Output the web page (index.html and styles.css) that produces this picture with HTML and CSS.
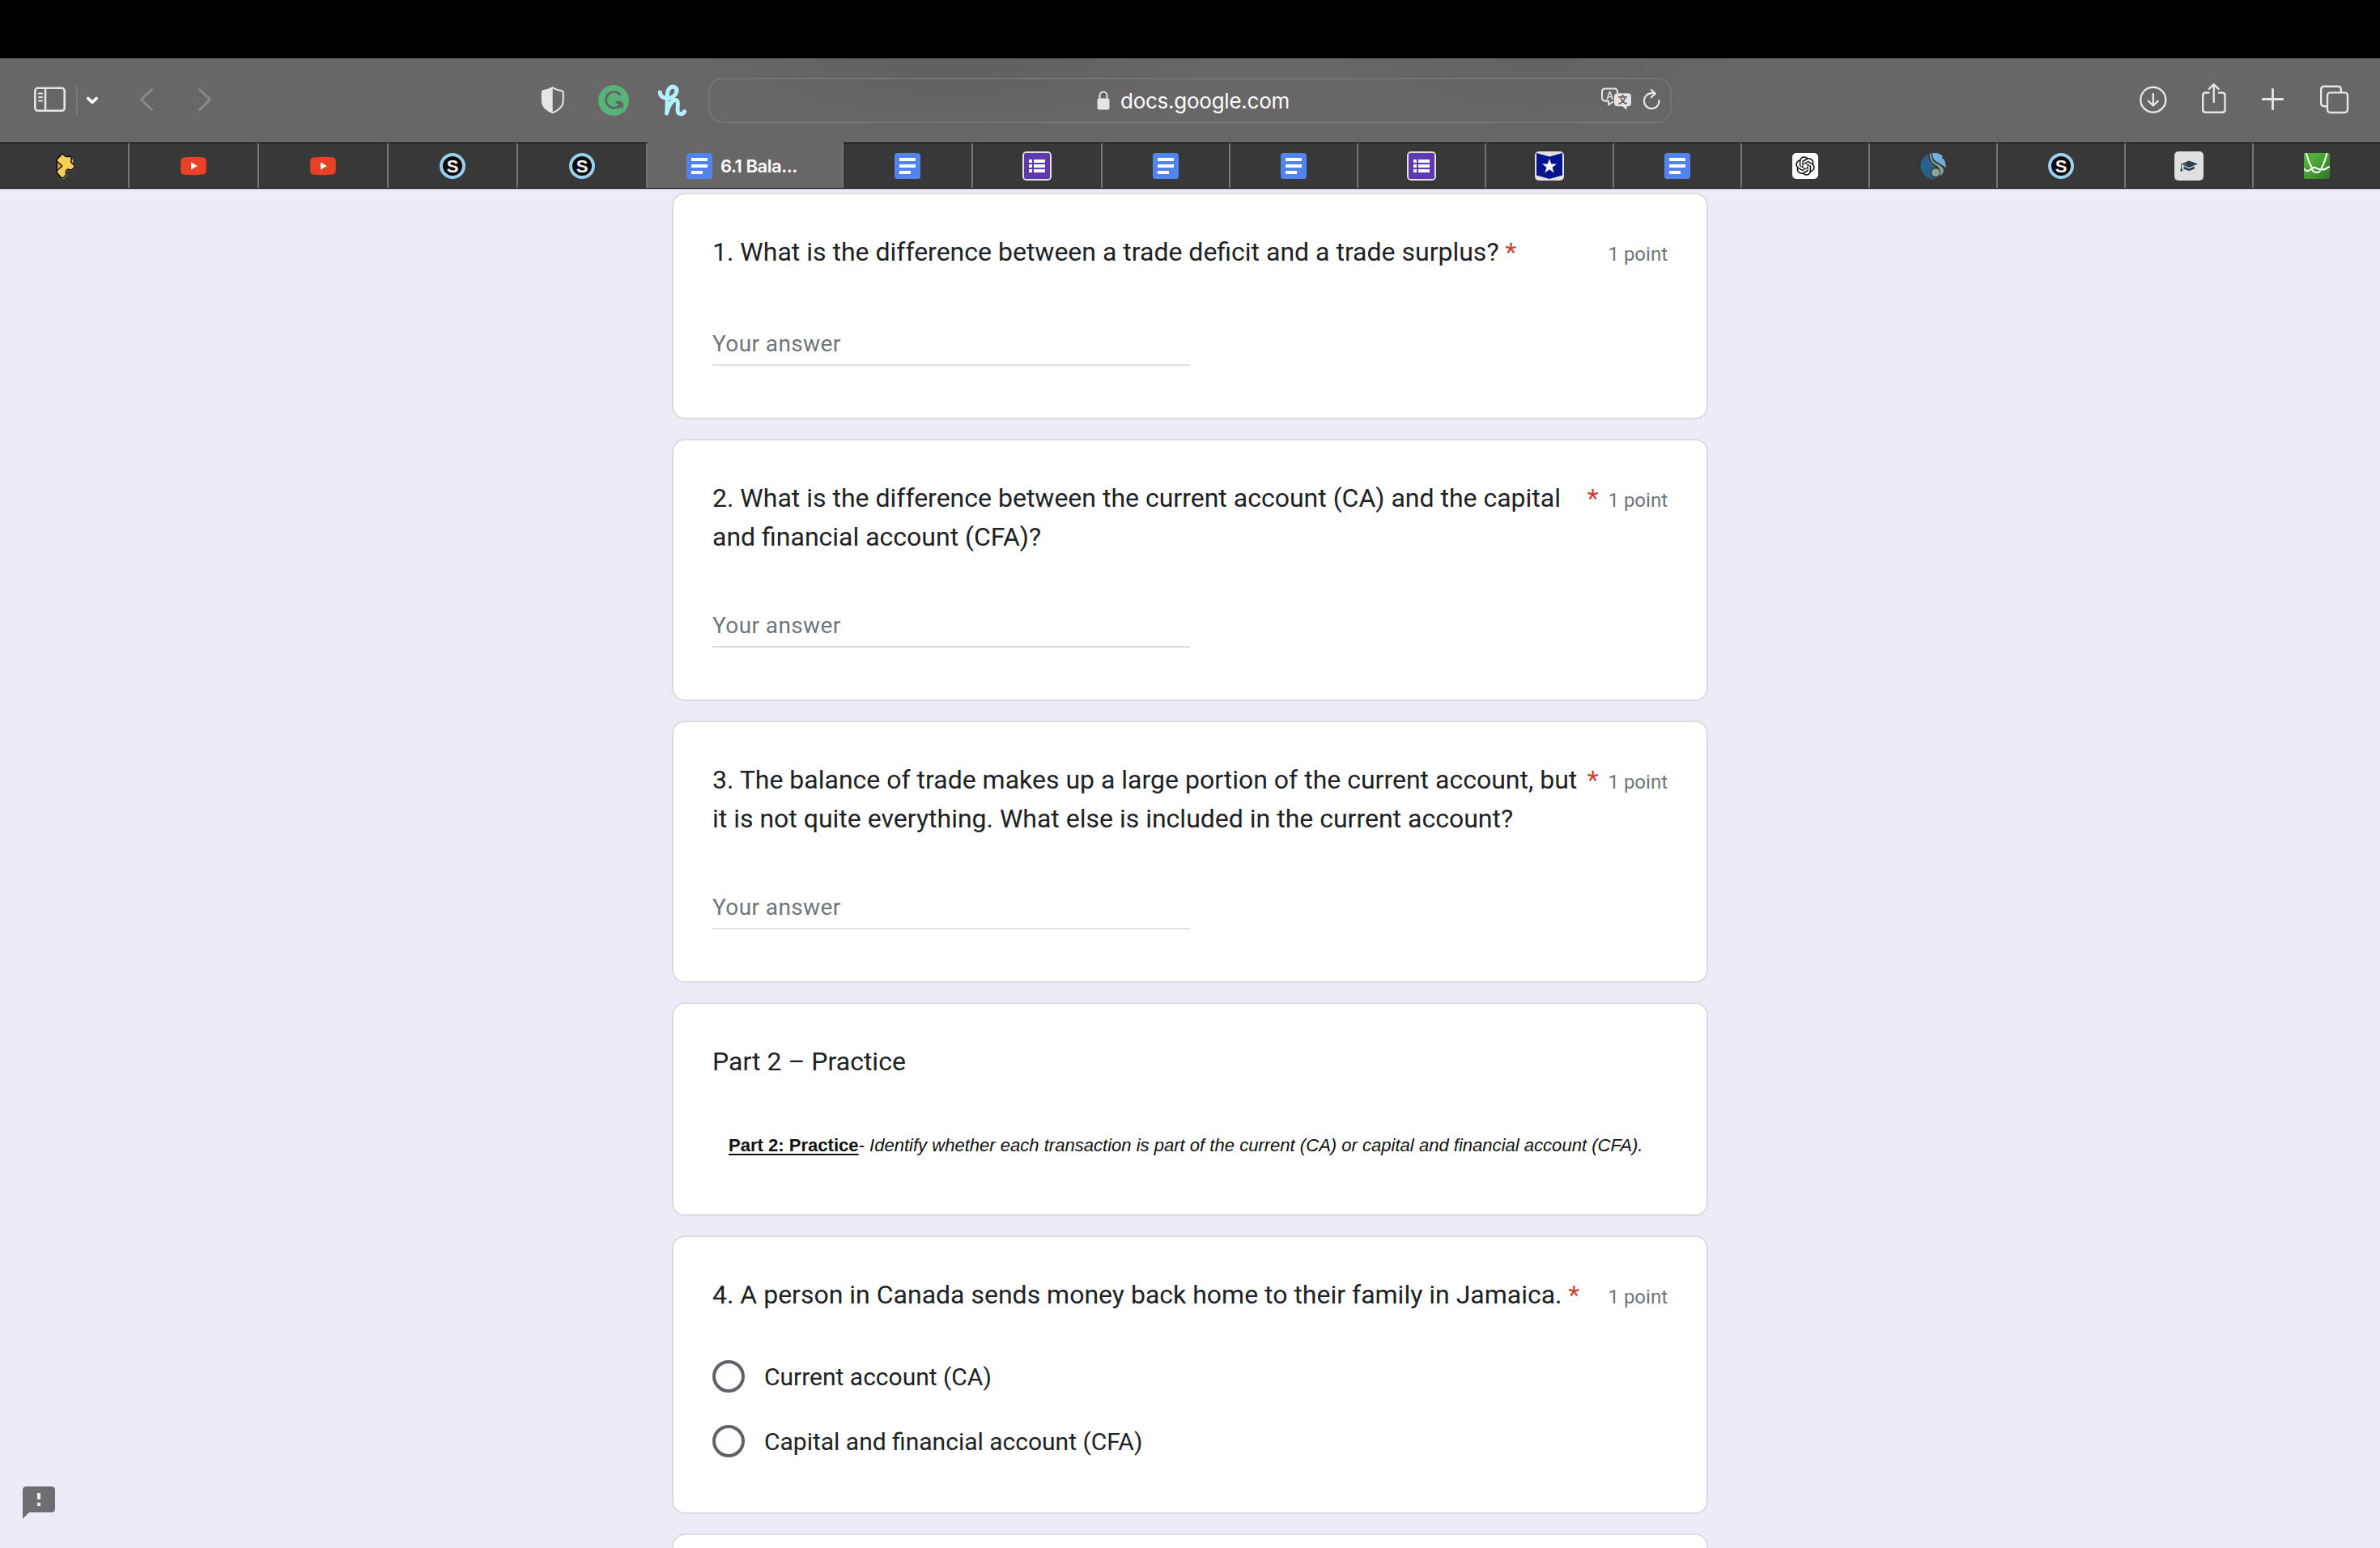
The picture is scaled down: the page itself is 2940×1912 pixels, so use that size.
FILE: index.html
```html
<!DOCTYPE html>
<html lang="en">
<head>
<meta charset="utf-8">
<title>6.1 Balance of Trade</title>
<link rel="stylesheet" href="styles.css">
</head>
<body>
<svg class="symbols" aria-hidden="true">
  <symbol id="docs" viewBox="0 0 32 32"><rect width="32" height="32" rx="3.5" fill="#5383ec"/><path d="M6 6h20v4H6zM6 14h20v4H6zM6 22h14v4H6z" fill="#fff"/></symbol>
  <symbol id="forms" viewBox="0 0 36 36"><rect width="36" height="36" rx="5" fill="#e3e1e3"/><rect x="2" y="2" width="32" height="32" rx="2" fill="#5f39b0"/><path d="M8 10h4v4H8zM14 10h14v4H14zM8 16h4v4H8zM14 16h14v4H14zM8 22h4v4H8zM14 22h14v4H14z" fill="#fff"/></symbol>
  <symbol id="youtube" viewBox="0 0 32 32"><path d="M4 5.4Q16 4.200 28 5.400Q31 5.800 31.500 9Q32.300 16 31.500 23Q31 26.200 28 26.600Q16 27.800 4 26.600Q1 26.200 .5 23Q-.3 16 .5 9Q1 5.800 4 5.400Z" fill="#ea4025"/><path d="M13 11.500v9l7.800-4.500z" fill="#fff"/></symbol>
</svg>

<div class="notch"></div>

<header class="toolbar">
  <div class="nav">
    <svg class="sidebar" width="44" height="48" viewBox="40 100 44 48"><g fill="none" stroke="#e6e4e5" stroke-width="2.600"><rect x="43.300" y="108.800" width="36.400" height="28" rx="3.500"/><path d="M56 109v28"/><path d="M48 115.500h4M48 120h4M48 124.500h4" stroke-width="2" stroke-linecap="round"/></g></svg>
    <span class="divider"></span>
    <svg class="chevron" width="20" height="48" viewBox="104 100 20 48"><path d="M108.800 121.500l5.200 5 5.200-5" fill="none" stroke="#fff" stroke-width="3.800" stroke-linecap="round" stroke-linejoin="round"/></svg>
    <svg class="back" width="22" height="48" viewBox="170 100 22 48"><path d="M187.500 110.500l-13 12.500 13 12.500" fill="none" stroke="#8b898a" stroke-width="3" stroke-linecap="round" stroke-linejoin="round"/></svg>
    <svg width="22" height="48" viewBox="242 100 22 48"><path d="M246.500 110.500l13 12.500-13 12.500" fill="none" stroke="#8b898a" stroke-width="3" stroke-linecap="round" stroke-linejoin="round"/></svg>
  </div>

  <div class="extensions">
    <svg width="34" height="48" viewBox="666 100 34 48"><path d="M682.700 108.300q6 3.200 10.800 3.600 2.200.3 2.200 2.500v10q0 9.500-13 14.700q-12.800-5.200-12.800-14.700v-10q0-2.200 2.200-2.500q4.800-.4 10.600-3.600z" fill="none" stroke="#e6e4e5" stroke-width="2"/><path d="M682.700 107.300v32.400q-13.800-5.500-13.800-15.300v-10q0-3 3-3.500q5-.5 10.800-3.600z" fill="#e6e4e5"/></svg>
    <svg class="ext-g" width="40" height="48" viewBox="738 100 40 48"><circle cx="758" cy="124" r="19" fill="#57b377"/><path d="M766.300 117A10 10 0 1 0 765.500 130.500M760.500 126.300H768" fill="none" stroke="#636263" stroke-width="2.800"/><path d="M769.700 127v8l-2.700-2.200-2.300 1.500-2.700-2.300 2.200-2.200-1.700-2.800z" fill="#636263"/></svg>
    <svg width="42" height="48" viewBox="810 100 42 48"><path d="M815.300 114C815.500 119.500 821 122.500 827 121.300C834.500 119.500 838 111.500 834.500 108.300C830 105 825 109 824.400 116C823.800 124 824.500 134 823.500 140C825 132 830.500 122.500 835 123.500C839.500 125 836 133 837.300 137.700C838.800 142 844 141.300 845.500 137.700" fill="none" stroke="#b3f3ff" stroke-width="5" stroke-linecap="round" stroke-linejoin="round"/></svg>
  </div>

  <div class="address">
    <div class="site">
      <svg width="16" height="24" viewBox="0 0 16 24"><path d="M3.500 10V6.500a4.500 5 0 0 1 9 0V10" fill="none" stroke="#e6e4e5" stroke-width="2"/><rect x=".5" y="9.500" width="15" height="14" rx="2" fill="#e6e4e5"/></svg>
      <span class="host">docs.google.com</span>
    </div>
    <div class="page-tools">
      <svg width="40" height="48" viewBox="1977 100 40 48"><path d="M1993 125.300l-6 4.200v-4.800h-4q-4-.2-4-4.200v-7q0-4 4-4h11q4 0 4 4v2" fill="none" stroke="#e6e4e5" stroke-width="2" stroke-linejoin="round"/><rect x="1994" y="115.300" width="21" height="16" rx="4" fill="#e6e4e5"/><path d="M2003 130l6.500 6v-6z" fill="#e6e4e5"/><text x="1988.500" y="122.500" text-anchor="middle" class="glyph-a">A</text><text x="2004.500" y="127.800" text-anchor="middle" class="glyph-cjk">文</text></svg>
      <svg width="26" height="48" viewBox="2028 100 26 48"><path d="M2049.500 124a9.300 9.500 0 1 1-9.300-8.800h4M2039.800 111l5 4.500-5 4.800" fill="none" stroke="#e6e4e5" stroke-width="2.200" stroke-linecap="round" stroke-linejoin="round"/></svg>
    </div>
  </div>

  <div class="actions">
    <svg width="40" height="48" viewBox="2640 100 40 48"><g fill="none" stroke="#e6e4e5" stroke-width="2.400" stroke-linecap="round" stroke-linejoin="round"><circle cx="2659.800" cy="123.200" r="15.500"/><path d="M2659.800 116v14M2654 124.800l5.800 5.700 5.800-5.700"/></g></svg>
    <svg width="38" height="48" viewBox="2716 100 38 48"><g fill="none" stroke="#e6e4e5" stroke-width="2.400" stroke-linecap="round" stroke-linejoin="round"><path d="M2728.500 114.500h-4q-3.300 0-3.300 3.300v17.700q0 3.300 3.300 3.300h20.700q3.300 0 3.300-3.300v-17.700q0-3.300-3.300-3.300h-4.200M2734.700 126v-21M2728.800 109.800l5.900-5.600 5.900 5.600"/></g></svg>
    <svg width="36" height="48" viewBox="2790 100 36 48"><path d="M2807.500 110.200v24.600M2795.200 122.500h24.600" stroke="#e6e4e5" stroke-width="2.800" stroke-linecap="round"/></svg>
    <svg width="42" height="48" viewBox="2862 100 42 48"><g fill="none" stroke="#e6e4e5" stroke-width="2.400"><path d="M2875 131.200h-4.200q-3.600 0-3.600-3.600v-17.200q0-3.600 3.600-3.600h17.400q3.600 0 3.600 3.600v4.200"/><rect x="2875" y="114.400" width="25" height="24.600" rx="3.600"/></g></svg>
  </div>
</header>

<nav class="tabs">
  <div class="tab wide"><svg width="32" height="32" viewBox="0 0 32 32"><path d="M7 9L15 1l4 3.500 6.500.5 2 4-.5 3 4 4.500-5 5.500-5-1-2 3 1.500 3-4.500 5h-2L7 24z" fill="#e2b73f"/><path d="M6.800 8.500L14 .8l3.800 3.400q3.200 1 5.200-.4l3 3.200q-2.500 3-.6 5l4.600 4.600-4.600 4.400q-5-1.800-6.400.3t.2 4.900l-4 4.600-2.500-.3L6.800 23.500z" fill="#f6cf57" stroke="#0c0c0c" stroke-width="1.500" stroke-linejoin="round"/><path d="M7.200 10l6.600 6-6.600 6z" fill="#f0a036" stroke="#0c0c0c" stroke-width="1.400" stroke-linejoin="round"/></svg></div>
  <div class="tab wide"><svg width="32" height="32"><use href="#youtube"/></svg></div>
  <div class="tab wide"><svg width="32" height="32"><use href="#youtube"/></svg></div>
  <div class="tab wide"><span class="s-icon">S</span></div>
  <div class="tab wide"><span class="s-icon">S</span></div>
  <div class="tab active"><svg width="32" height="32"><use href="#docs"/></svg><span>6.1 Bala...</span></div>
  <div class="tab wide"><svg width="32" height="32"><use href="#docs"/></svg></div>
  <div class="tab wide"><svg width="36" height="36"><use href="#forms"/></svg></div>
  <div class="tab"><svg width="32" height="32"><use href="#docs"/></svg></div>
  <div class="tab"><svg width="32" height="32"><use href="#docs"/></svg></div>
  <div class="tab"><svg width="36" height="36"><use href="#forms"/></svg></div>
  <div class="tab"><svg width="36" height="36" viewBox="0 0 36 36"><rect width="36" height="36" rx="5" fill="#e3e1e3"/><path d="M2 2l16 4.500L34 2v27.500L18 34 2 29.500z" fill="#04168f"/><path d="M18 9l2.200 6.600h6.800l-5.500 4.100 2.100 6.800-5.600-4.200-5.600 4.200 2.100-6.800L9 15.600h6.800z" fill="#fff"/></svg></div>
  <div class="tab"><svg width="32" height="32"><use href="#docs"/></svg></div>
  <div class="tab"><svg width="32" height="32" viewBox="0 0 32 32"><rect width="32" height="32" rx="5" fill="#fff"/><path transform="translate(4.200 4.200) scale(.983)" fill="#111" d="M22.2819 9.8211a5.9847 5.9847 0 0 0-.5157-4.9108 6.0462 6.0462 0 0 0-6.5098-2.9A6.0651 6.0651 0 0 0 4.9807 4.1818a5.9847 5.9847 0 0 0-3.9977 2.9 6.0462 6.0462 0 0 0 .7427 7.0966 5.98 5.98 0 0 0 .511 4.9107 6.051 6.051 0 0 0 6.5146 2.9001A5.9847 5.9847 0 0 0 13.2599 24a6.0557 6.0557 0 0 0 5.7718-4.2058 5.9894 5.9894 0 0 0 3.9977-2.9001 6.0557 6.0557 0 0 0-.7475-7.0729zm-9.022 12.6081a4.4755 4.4755 0 0 1-2.8764-1.0408l.1419-.0804 4.7783-2.7582a.7948.7948 0 0 0 .3927-.6813v-6.7369l2.02 1.1686a.071.071 0 0 1 .038.052v5.5826a4.504 4.504 0 0 1-4.4945 4.4944zm-9.6607-4.1254a4.4708 4.4708 0 0 1-.5346-3.0137l.142.0852 4.783 2.7582a.7712.7712 0 0 0 .7806 0l5.8428-3.3685v2.3324a.0804.0804 0 0 1-.0332.0615L9.74 19.9502a4.4992 4.4992 0 0 1-6.1408-1.6464zM2.3408 7.8956a4.485 4.485 0 0 1 2.3655-1.9728V11.6a.7664.7664 0 0 0 .3879.6765l5.8144 3.3543-2.0201 1.1685a.0757.0757 0 0 1-.071 0l-4.8303-2.7865A4.504 4.504 0 0 1 2.3408 7.872zm16.5963 3.8558L13.1038 8.364 15.1192 7.2a.0757.0757 0 0 1 .071 0l4.8303 2.7913a4.4944 4.4944 0 0 1-.6765 8.1042v-5.6772a.79.79 0 0 0-.407-.667zm2.0107-3.0231l-.142-.0852-4.7735-2.7818a.7759.7759 0 0 0-.7854 0L9.409 9.2297V6.8974a.0662.0662 0 0 1 .0284-.0615l4.8303-2.7866a4.4992 4.4992 0 0 1 6.6802 4.66zM8.3065 12.863l-2.02-1.1638a.0804.0804 0 0 1-.038-.0567V6.0742a4.4992 4.4992 0 0 1 7.3757-3.4537l-.142.0805L8.704 5.459a.7948.7948 0 0 0-.3927.6813zm1.0976-2.3654l2.602-1.4998 2.6069 1.4998v2.9994l-2.5974 1.4997-2.6067-1.4997Z"/></svg></div>
  <div class="tab"><svg width="32" height="32" viewBox="0 0 32 32"><path d="M10 1.300A16 16 0 0 0 19 31.700Q12 29 12.500 24T19 16.500Q9.500 10 10 1.300z" fill="#28618a"/><path d="M15 0Q23-.5 27.500 3.500L27 7l2.500.5Q31.800 12 31.600 18Q26 13.500 20.500 11Q14.500 7 15 0z" fill="#71b0dc"/><path d="M11.500 1l2-.5Q13 9 20 13q9 4 9 8.500Q28 26.500 24.500 28.500Q27 19 18.500 14.500Q11.500 10 11.500 1z" fill="#84a598"/><circle cx="19" cy="24.200" r="5" fill="#84a598"/></svg></div>
  <div class="tab"><span class="s-icon">S</span></div>
  <div class="tab"><svg width="36" height="36" viewBox="0 0 36 36"><rect width="36" height="36" rx="5" fill="#e0e0e0"/><path d="M18 11.500l11 4-11 4.500-7.500-3 7-1.200-8.500.8v3.500l1.500 4.200-3.300.3 1-4.500v-4.400z" fill="#2c4053"/><path d="M11.500 18.500l6.500 2.700 6.700-2.700v3.200L18 24l-6.500-2.300z" fill="#2c4053"/></svg></div>
  <div class="tab"><svg width="32" height="32" viewBox="0 0 32 32"><defs><linearGradient id="leaf" x1="0" y1="0" x2="1" y2="1"><stop offset=".3" stop-color="#4fae38"/><stop offset="1" stop-color="#2f7426"/></linearGradient></defs><rect width="32" height="32" rx="2" fill="url(#leaf)"/><path d="M2.800 0Q5 10 9.500 17.500M28.500 0Q26 11 21.500 19M0 19.500Q4 24.500 8 20.500T15 18.500T22.500 20.500T29 18L32 17M9.500 19.500Q12 24.500 16 24T20 21.500" fill="none" stroke="#fff" stroke-width="2.100"/></svg></div>
</nav>

<main class="form">
  <section class="card">
    <div class="head"><h2>1. What is the difference between a trade deficit and a trade surplus?</h2><span class="star">*</span><span class="points">1 point</span></div>
    <div class="answer">Your answer</div>
  </section>
  <section class="card">
    <div class="head two"><h2>2. What is the difference between the current account (CA) and the capital and financial account (CFA)?</h2><span class="star">*</span><span class="points">1 point</span></div>
    <div class="answer">Your answer</div>
  </section>
  <section class="card">
    <div class="head two"><h2>3. The balance of trade makes up a large portion of the current account, but it is not quite everything. What else is included in the current account?</h2><span class="star">*</span><span class="points">1 point</span></div>
    <div class="answer">Your answer</div>
  </section>
  <section class="card practice">
    <div class="head"><h2>Part 2 – Practice</h2></div>
    <p class="instructions"><b>Part 2: Practice</b><i>- Identify whether each transaction is part of the current (CA) or capital and financial account (CFA).</i></p>
  </section>
  <section class="card choices">
    <div class="head"><h2>4. A person in Canada sends money back home to their family in Jamaica.</h2><span class="star">*</span><span class="points">1 point</span></div>
    <div class="option"><span class="radio"></span>Current account (CA)</div>
    <div class="option"><span class="radio"></span>Capital and financial account (CFA)</div>
  </section>
  <section class="card"></section>
</main>

<svg class="feedback" width="48" height="48" viewBox="0 0 24 24"><path fill="#6f6d72" d="M20 2H4c-1.100 0-1.990.9-1.990 2L2 22l4-4h14c1.100 0 2-.9 2-2V4c0-1.100-.9-2-2-2zm-7 12h-2v-2h2v2zm0-4h-2V6h2v4z"/></svg>
</body>
</html>
```

FILE: styles.css
```css
* { box-sizing: border-box; }
body {
  margin: 0;
  width: 2940px;
  height: 1912px;
  overflow: hidden;
  background: #eeebf6;
  font-family: Roboto, sans-serif;
  color: #202124;
}
svg { display: block; flex: none; }
.symbols { position: absolute; width: 0; height: 0; }
.glyph-a { font: 500 13px Inter, sans-serif; fill: #e6e4e5; }
.glyph-cjk { font: 700 12px "Noto Sans CJK SC", sans-serif; fill: #5d5b5c; }

.notch { height: 72px; background: #000; }

.toolbar {
  display: grid;
  grid-template-columns: 666px 209px 1190px 1fr;
  align-items: center;
  height: 104px;
  background:
    radial-gradient(ellipse 340px 90px at 1180px 0, #615f60, transparent),
    radial-gradient(ellipse 280px 90px at 1900px 0, #636363, transparent),
    #686667;
}
.nav, .extensions, .actions { display: flex; align-items: center; }
.nav { padding-left: 40px; }
.divider { width: 2px; height: 36px; margin: 0 8px 0 10px; background: #7b797a; }
.back { margin: 0 50px 0 46px; }
.ext-g { margin: 0 32px 0 38px; }
.actions { justify-content: flex-end; gap: 36px; padding-right: 36px; }

.address {
  display: grid;
  grid-template-columns: 1fr auto 1fr;
  align-items: center;
  height: 56px;
  border: 2px solid #757374;
  border-radius: 17px;
}
.site {
  grid-column: 2;
  display: flex;
  align-items: center;
  gap: 13px;
  padding-left: 8px;
  color: #fff;
  font: 400 26px/32px Inter, sans-serif;
  letter-spacing: -0.25px;
}
.host { padding-top: 2px; }
.page-tools { display: flex; justify-content: flex-end; gap: 11px; padding-right: 9px; }

.tabs {
  display: flex;
  height: 58px;
  background: #383838;
  border-bottom: 1px solid #b5b2ba;
}
.tab {
  display: flex;
  align-items: center;
  justify-content: center;
  flex: none;
  width: 158px;
  height: 57px;
  border-top: 1px solid #000;
  border-bottom: 1px solid #000;
  box-shadow: inset -2px 0 #767475;
  padding-right: 2px;
}
.tab.wide { width: 160px; }
.tab:last-child { width: 156px; padding-right: 0; box-shadow: none; }
.tab.active {
  width: 242px;
  justify-content: flex-start;
  gap: 10px;
  padding-left: 48px;
  border-top-color: #686667;
  background: #686667;
  color: #fff;
  font: 600 22px/28px Inter, sans-serif;
  letter-spacing: -0.45px;
}
.s-icon {
  width: 32px;
  height: 32px;
  border: 4px solid #98d0f0;
  border-radius: 50%;
  background: #0b0b0b;
  color: #f4f4f4;
  font: 700 22px/25px "Liberation Sans", sans-serif;
  text-align: center;
}

.form {
  display: flex;
  flex-direction: column;
  gap: 24px;
  width: 1280px;
  height: 1674px;
  margin: 4px auto 0;
  overflow: hidden;
}
.card {
  flex: none;
  min-height: 120px;
  padding: 47px 48px 64px;
  border: 2px solid #dadce0;
  border-radius: 16px;
  background: #fff;
}
.head { display: flex; align-items: baseline; }
.head h2 {
  margin: 0;
  font-size: 32px;
  font-weight: 400;
  line-height: 48px;
}
.star {
  flex: none;
  padding-left: 8px;
  color: #cb3d2c;
  font-size: 32px;
  line-height: 48px;
}
.points {
  flex: none;
  margin-left: auto;
  padding-left: 12px;
  color: #70757a;
  font-size: 24px;
  line-height: 32px;
}
.answer {
  width: 590px;
  margin-top: 66px;
  height: 51px;
  border-bottom: 2px solid #dedede;
  color: #70757a;
  font-size: 28px;
  line-height: 48px;
  letter-spacing: 0.4px;
}
.two + .answer { margin-top: 62px; }
.practice { height: 264px; }
.instructions {
  margin: 64px 0 0 20px;
  color: #111;
  font: 22.050px/32px "Liberation Sans", sans-serif;
  white-space: nowrap;
}
.instructions b { text-decoration: underline; text-underline-offset: 3px; text-decoration-thickness: 2px; }
.choices { height: 344px; }
.option {
  display: flex;
  align-items: center;
  gap: 24px;
  height: 40px;
  font-size: 30px;
}
.head + .option { margin-top: 57px; }
.option + .option { margin-top: 40px; }
.radio { width: 40px; height: 40px; border: 4px solid #5f6368; border-radius: 50%; }

.feedback { position: absolute; left: 24px; top: 1832px; }
```
